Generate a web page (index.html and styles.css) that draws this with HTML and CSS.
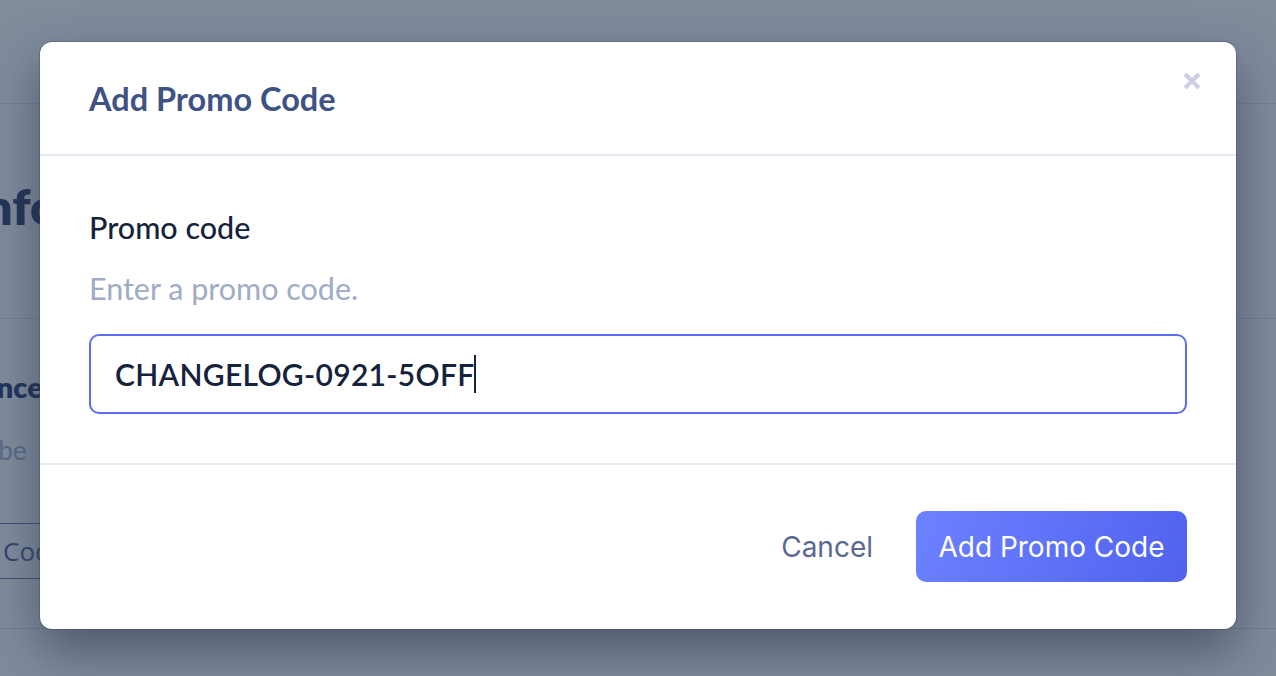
FILE: index.html
```html
<!DOCTYPE html>
<html lang="en">
<head>
<meta charset="utf-8">
<title>Add Promo Code</title>
<link rel="stylesheet" href="styles.css">
</head>
<body>
  <div class="page">
    <div class="topbar"></div>
    <section class="section">
      <h1 class="page-title">Info</h1>
    </section>
    <section class="section second">
      <h2 class="sub-title">Balance</h2>
      <p class="sub-text">Subscribe</p>
      <div class="promo-btn">Code</div>
    </section>
    <div class="rule"></div>
  </div>

  <div class="overlay">
    <div class="modal" role="dialog" aria-labelledby="modal-title">
      <header class="modal-header">
        <h3 id="modal-title" class="modal-title">Add Promo Code</h3>
        <button class="close" aria-label="Close">
          <svg width="20" height="20" viewBox="0 0 20 20"><path d="M3 3 L17 17 M17 3 L3 17" stroke="#c9d0e1" stroke-width="4.2" stroke-linecap="butt"/></svg>
        </button>
      </header>
      <div class="modal-body">
        <label class="field-label" for="code">Promo code</label>
        <p class="field-help">Enter a promo code.</p>
        <div class="input"><span class="input-text">CHANGELOG-0921-5OFF</span><span class="caret"></span></div>
      </div>
      <footer class="modal-footer">
        <button class="btn-cancel">Cancel</button>
        <button class="btn-primary">Add Promo Code</button>
      </footer>
    </div>
  </div>
</body>
</html>
```

FILE: styles.css
```css
* { box-sizing: border-box; }
html, body { margin: 0; padding: 0; }
body {
  width: 1276px;
  height: 676px;
  overflow: hidden;
  background: #808b9c;
  font-family: Lato, "Open Sans", sans-serif;
  position: relative;
}

/* background page (dimmed) */
.page { display: flex; flex-direction: column; }
.topbar { height: 104px; border-bottom: 1px solid #737f93; }
.section { border-bottom: 1px solid #737f93; }
.page-title {
  margin: 72px 0 0 -31px;
  height: 142px;
  font-size: 50px;
  line-height: 60px;
  font-weight: 800;
  color: #243657;
}
.second { border-bottom: none; display: flex; flex-direction: column; }
.sub-title {
  margin: 50px 0 0 -60px;
  font-size: 29px;
  line-height: 36px;
  font-weight: 800;
  color: #22345a;
}
.sub-text {
  margin: 29px 0 0 -84px;
  font-size: 26px;
  line-height: 32px;
  color: #5b6a88;
}
.promo-btn {
  margin: 57px 0 0 -30px;
  height: 56px;
  width: 300px;
  border: 1px solid #3f5079;
  border-left: none;
  display: flex;
  align-items: center;
  padding-left: 33px;
  font-size: 26px;
  color: #34476c;
  font-family: "Open Sans", sans-serif;
}
.rule { margin-top: 49px; border-top: 1px solid #737f93; }

/* modal */
.overlay {
  position: absolute;
  inset: 0;
}
.modal {
  position: absolute;
  left: 40px;
  top: 42px;
  width: 1196px;
  height: 587px;
  background: #fff;
  border-radius: 12px;
  box-shadow: 0 0 0 1px rgba(60, 72, 92, 0.35), 0 22px 50px rgba(35, 48, 70, 0.55);
  display: flex;
  flex-direction: column;
}
.modal-header {
  position: relative;
  height: 114px;
  flex: none;
  border-bottom: 2px solid #e4ebf5;
  display: flex;
  align-items: center;
  padding: 0 49px;
}
.modal-title {
  margin: 0;
  font-size: 32.5px;
  font-weight: 700;
  color: #3f5284;
}
.close {
  position: absolute;
  right: 33px;
  top: 28px;
  width: 22px;
  height: 22px;
  padding: 1px;
  border: none;
  background: none;
}
.modal-body {
  padding: 53px 49px 49px;
  display: flex;
  flex-direction: column;
}
.field-label {
  font-size: 30.5px;
  line-height: 36px;
  font-weight: 500;
  color: #14223c;
}
.field-help {
  margin: 25px 0 28px;
  font-size: 30.5px;
  line-height: 36px;
  color: #9eacc6;
}
.input {
  height: 80px;
  flex: none;
  border: 2px solid #5b6cf0;
  border-radius: 10px;
  display: flex;
  align-items: center;
  padding-left: 24px;
}
.input-text {
  font-size: 30px;
  font-weight: 600;
  color: #14223c;
  letter-spacing: 0.3px;
}
.caret {
  width: 2px;
  height: 38px;
  background: #14223c;
  margin-left: 0;
}
.modal-footer {
  border-top: 2px solid #e4ebf5;
  padding: 46px 49px 47px;
  display: flex;
  justify-content: flex-end;
  align-items: center;
}
.btn-cancel {
  border: none;
  background: none;
  padding: 0;
  margin-right: 43px;
  font-family: Inter, sans-serif;
  font-size: 28px;
  color: #5b6890;
}
.btn-primary {
  height: 71px;
  width: 271px;
  border: none;
  border-radius: 10px;
  background: linear-gradient(110deg, #6c82ff 0%, #5062ee 100%);
  color: #fff;
  font-family: Inter, sans-serif;
  font-size: 28px;
  padding: 0;
}
```
